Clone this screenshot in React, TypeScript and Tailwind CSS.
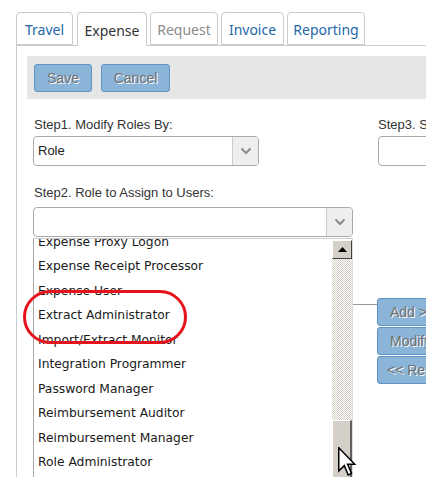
import React from "react";

const items = [
  "Expense Proxy Logon",
  "Expense Receipt Processor",
  "Expense User",
  "Extract Administrator",
  "Import/Extract Monitor",
  "Integration Programmer",
  "Password Manager",
  "Reimbursement Auditor",
  "Reimbursement Manager",
  "Role Administrator",
];

function Chevron() {
  return (
    <svg width="12" height="8" viewBox="0 0 12 8">
      <path d="M1.5 1.5 L6 6 L10.5 1.5" fill="none" stroke="#8a8a8a" strokeWidth="2" />
    </svg>
  );
}

export default function App() {
  const tab = "h-[33px] border border-[#cccccc] rounded-t-[4px] flex items-center justify-center text-[14px] bg-white pt-px";
  const blueBtn =
    "h-[28px] rounded-[3px] border border-[#5f93c4] bg-[#8ab4d8] text-[#707070] text-[14px] flex items-center justify-center [text-shadow:1px_1px_0_#ffffff]";
  return (
    <div
      className="relative w-[426px] h-[477px] overflow-hidden bg-white"
      style={{ fontFamily: '"Liberation Sans", Arial, sans-serif' }}
    >
      {/* Tabs */}
      <div className="pt-[12px] pl-[16px]">
        <div className="flex items-end gap-[3px] border-b border-[#cccccc] h-[34px]" style={{ fontFamily: '"Noto Sans", sans-serif' }}>
          <div className={`${tab} w-[57px] text-[#2468a8] mr-px`}>Travel</div>
          <div className={`${tab} w-[70px] h-[34px] -mb-px border-b-0 text-[#333333]`}>Expense</div>
          <div className={`${tab} w-[68px] text-[#8c8c8c]`}>Request</div>
          <div className={`${tab} w-[63px] text-[#2468a8]`}>Invoice</div>
          <div className={`${tab} w-[78px] text-[#2468a8]`}>Reporting</div>
        </div>
      </div>

      {/* Panel */}
      <div className="ml-[16px] border-l border-[#cccccc] h-[432px] pl-[10px] pt-[10px]">
        <div className="h-[43px] bg-[#e6e6e6] flex items-start gap-[9px] pl-[7px] pt-[8px]">
          <div className={`${blueBtn} w-[58px]`}>Save</div>
          <div className={`${blueBtn} w-[69px]`}>Cancel</div>
        </div>

        <div className="flex pl-[6px]">
          <div className="w-[320px] shrink-0">
            <div className="mt-[18px] text-[13px] leading-[16px] text-[#333333] pl-px">Step1. Modify Roles By:</div>
            <div className="mt-[3px] w-[226px] h-[30px] border border-[#aaaaaa] rounded-[4px] flex overflow-hidden">
              <div className="flex-1 flex items-center pl-[4px] text-[13px] text-[#222222]">Role</div>
              <div className="w-[26px] bg-[#eeeeee] border-l border-[#cccccc] flex items-center justify-center">
                <Chevron />
              </div>
            </div>
            <div className="mt-[19px] text-[13px] leading-[16px] text-[#333333] pl-px">Step2. Role to Assign to Users:</div>
            <div className="mt-[6px] w-[320px] h-[30px] border border-[#aaaaaa] rounded-[4px] flex overflow-hidden">
              <div className="flex-1" />
              <div className="w-[26px] bg-[#eeeeee] border-l border-[#cccccc] flex items-center justify-center">
                <Chevron />
              </div>
            </div>
            {/* Listbox */}
            <div className="mt-px w-[320px] h-[240px] border-l border-[#aaaaaa] border-r border-r-[#dddddd] border-t border-t-[#cccccc] flex overflow-hidden">
              <div
                className="flex-1 overflow-hidden text-[12.3px] text-[#1a1a1a]"
                style={{ fontFamily: '"DejaVu Sans", Verdana, sans-serif' }}
              >
                <div className="-mt-[9px] pl-[4px]">
                  {items.map((t) => (
                    <div key={t} className="h-[24.45px] flex items-center whitespace-nowrap">
                      {t}
                    </div>
                  ))}
                </div>
              </div>
              {/* Scrollbar */}
              <div className="w-[20px] shrink-0 flex flex-col pt-px">
                <div className="h-[19px] bg-[#d4d0c8] border border-t-white border-l-white border-r-[#404040] border-b-[#404040] flex items-center justify-center">
                  <svg width="9" height="5" viewBox="0 0 9 5">
                    <path d="M0 5 L4.5 0 L9 5 Z" fill="#000" />
                  </svg>
                </div>
                <div className="h-[161px] bg-[repeating-conic-gradient(#d4d0c8_0_25%,#ffffff_0_50%)] bg-[length:2px_2px]" />
                <div className="flex-1 bg-[#d4d0c8] border-t border-l border-t-white border-l-white border-r-2 border-r-[#606060]" />
              </div>
            </div>
          </div>

          <div className="ml-[25px] flex flex-col">
            <div className="mt-[18px] text-[13px] leading-[16px] text-[#333333] whitespace-nowrap">Step3. Select Users</div>
            <div className="mt-[3px] w-[80px] h-[30px] border border-[#aaaaaa] rounded-[4px]" />
          </div>
        </div>
      </div>

      {/* Right side connector & buttons */}
      <div className="absolute left-[353px] top-[304px] w-[24px] h-px bg-[#999999]" />
      <div className="absolute left-[377px] top-[298px] flex flex-col gap-px">
        <div className={`${blueBtn} w-[90px] justify-start pl-[12px] whitespace-nowrap`}>Add &gt;&gt;</div>
        <div className={`${blueBtn} w-[90px] justify-start pl-[12px] whitespace-nowrap`}>Modify</div>
        <div className={`${blueBtn} w-[90px] justify-start pl-[9px] whitespace-nowrap`}>&lt;&lt; Remove</div>
      </div>

      {/* Red annotation */}
      <div className="absolute left-[23px] top-[290px] w-[164px] h-[54px] border-[3px] border-[#e5131b] rounded-[27px]" />

      {/* Mouse cursor */}
      <svg className="absolute left-[338px] top-[447px]" width="18" height="30" viewBox="0 0 12 20">
        <path
          d="M0.5 0.5 L0.5 16 L4.2 12.4 L6.8 18.6 L9 17.6 L6.4 11.5 L11.2 11.5 Z"
          fill="#ffffff"
          stroke="#000000"
          strokeWidth="1"
          strokeLinejoin="miter"
        />
      </svg>
    </div>
  );
}
